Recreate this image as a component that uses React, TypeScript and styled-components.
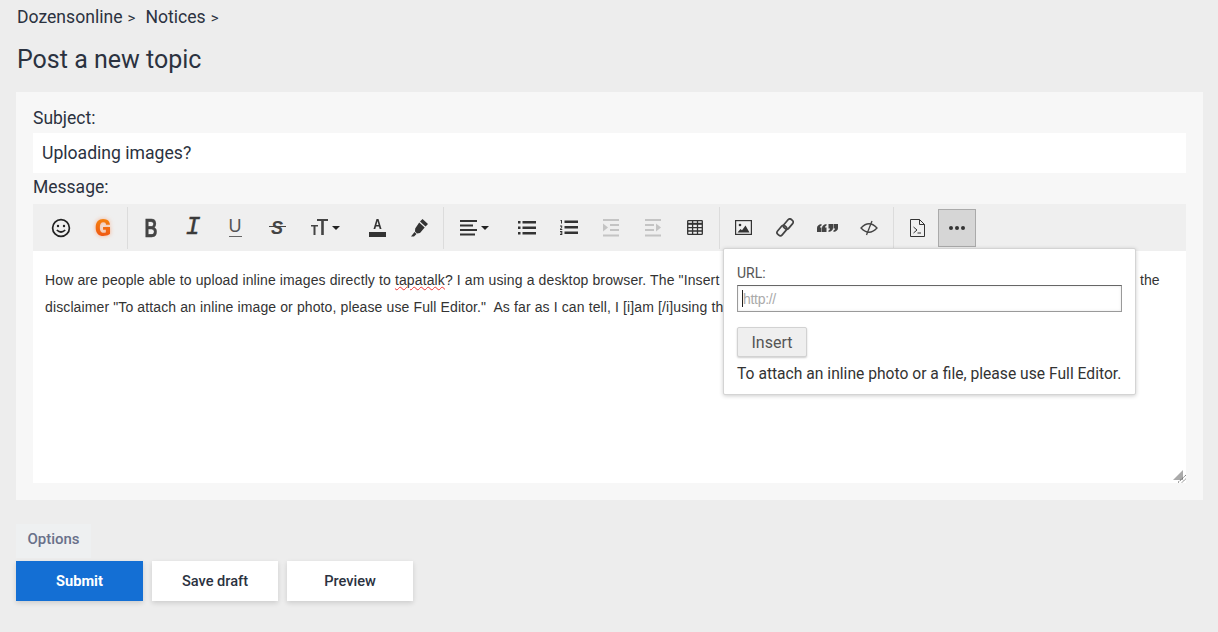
import React from 'react';
import styled, { createGlobalStyle } from 'styled-components';

const GlobalStyle = createGlobalStyle`
  html, body {
    margin: 0;
    padding: 0;
    background: #ededed;
    font-family: Roboto, "Liberation Sans", sans-serif;
    color: #2f3542;
  }
`;

const Page = styled.div`
  width: 1218px;
  height: 632px;
  overflow: hidden;
  padding: 0 15px 0 16px;
  box-sizing: border-box;
`;

const Breadcrumbs = styled.div`
  display: flex;
  gap: 10px;
  padding: 7px 0 0 1px;
  font-size: 17.6px;
  line-height: 21px;
  color: #2b3240;
`;

const Crumb = styled.span`
  &::after {
    content: '>';
    margin-left: 5px;
    font-size: 15px;
  }
`;

const Title = styled.h1`
  margin: 16px 0 0 1px;
  font-size: 25px;
  line-height: 30px;
  font-weight: 400;
  color: #2b3240;
`;

const Panel = styled.div`
  margin-top: 17px;
  background: #f7f7f7;
  padding: 16px 17px 17px;
  height: 408px;
  box-sizing: border-box;
`;

const FieldLabel = styled.div`
  font-size: 17.5px;
  line-height: 21px;
  padding-bottom: 4px;
  color: #2b3240;
`;

const SubjectInput = styled.input`
  display: block;
  width: 100%;
  height: 40px;
  box-sizing: border-box;
  border: 0;
  outline: 0;
  background: #fff;
  padding: 0 9px;
  margin-bottom: 4px;
  font-family: Roboto, sans-serif;
  font-size: 17.6px;
  color: #2b3240;
`;

const EditorWrap = styled.div`
  position: relative;
  margin-top: 2px;
`;

const Toolbar = styled.div`
  display: flex;
  align-items: center;
  height: 47px;
  padding: 0 0 0 7px;
  background: #efefef;
`;

const ToolButton = styled.div<{ $wide?: number; $active?: boolean }>`
  width: ${p => p.$wide ?? 42}px;
  height: 38px;
  flex: none;
  display: flex;
  align-items: center;
  justify-content: center;
  box-sizing: border-box;
  color: #333;
  ${p =>
    p.$active &&
    `
    width: 38px;
    background: #d6d6d6;
    border: 1px solid #aaa;
  `}
`;

const DropButton = styled(ToolButton)`
  padding-right: 3px;
`;

const Divider = styled.div`
  width: 1px;
  height: 42px;
  margin: 0 2px 0 3px;
  background: #dcdcdc;
  flex: none;
`;

const Caret = styled.span`
  width: 0;
  height: 0;
  margin-left: 4px;
  border-left: 4px solid transparent;
  border-right: 4px solid transparent;
  border-top: 4px solid #222;
`;

const LogoG = styled.span`
  font-family: Roboto, sans-serif;
  font-weight: 900;
  font-size: 24px;
  line-height: 26px;
  background: linear-gradient(180deg, #f58a0b, #ee4d16);
  -webkit-background-clip: text;
  background-clip: text;
  color: transparent;
  filter: drop-shadow(0 0 2px rgba(255, 130, 70, 0.6));
`;

const BoldGlyph = styled.span`
  display: inline-block;
  font-family: "Liberation Sans", sans-serif;
  font-weight: 700;
  font-size: 25px;
  line-height: 24px;
  color: #444;
  -webkit-text-stroke: 0.4px #444;
  transform: scaleX(0.72);
`;

const ItalicGlyph = styled.span`
  font-family: "Liberation Mono", monospace;
  font-style: italic;
  font-size: 25px;
  line-height: 24px;
  color: #3a3a3a;
  -webkit-text-stroke: 0.4px #3a3a3a;
`;

const UnderlineGlyph = styled.span`
  display: inline-block;
  font-family: "Liberation Sans", sans-serif;
  font-size: 18px;
  line-height: 17px;
  width: 13px;
  text-align: center;
  color: #555;
  border-bottom: 1px solid #666;
  padding-bottom: 1px;
`;

const StrikeGlyph = styled.span`
  position: relative;
  display: inline-block;
  width: 17px;
  text-align: center;
  font-family: "Liberation Sans", sans-serif;
  font-style: italic;
  font-weight: 700;
  font-size: 18px;
  line-height: 20px;
  color: #444;
  &::after {
    content: '';
    position: absolute;
    left: 0;
    right: 0;
    top: 8px;
    height: 1px;
    background: #444;
  }
`;

const EditorBody = styled.div`
  position: relative;
  height: 232px;
  box-sizing: border-box;
  background: #fff;
  padding: 16px 12px 15px;
  font-family: "Liberation Sans", Arial, sans-serif;
  font-size: 14px;
  letter-spacing: 0.12px;
  line-height: 27px;
  color: #333;
  white-space: pre;
  overflow: hidden;
`;

const Misspelled = styled.span`
  text-decoration: underline wavy #e33;
  text-decoration-thickness: 1px;
`;

const ResizeHandle = styled.svg`
  position: absolute;
  right: 0;
  bottom: 0;
`;

const Popup = styled.div`
  position: absolute;
  top: 44px;
  left: 690px;
  width: 413px;
  height: 147px;
  box-sizing: border-box;
  padding: 16px 14px 0 13px;
  background: #fff;
  border: 1px solid #d4d4d4;
  border-radius: 2px;
  box-shadow: 0 1px 4px rgba(0, 0, 0, 0.2);
`;

const UrlLabel = styled.div`
  font-size: 14px;
  line-height: 16px;
  color: #555;
  margin-bottom: 4px;
`;

const UrlField = styled.div`
  position: relative;
  &::before {
    content: '';
    position: absolute;
    left: 5px;
    top: 5px;
    width: 1px;
    height: 17px;
    background: #222;
  }
`;

const UrlInput = styled.input`
  display: block;
  width: 385px;
  height: 27px;
  box-sizing: border-box;
  border: 1px solid #9a9a9a;
  border-top-color: #666;
  outline: 0;
  padding: 0 5px;
  font-family: "Liberation Sans", Arial, sans-serif;
  font-size: 14px;
  letter-spacing: -0.3px;
  box-shadow: inset 0 0 3px rgba(0, 0, 0, 0.1);
  &::placeholder {
    color: #aaa;
    opacity: 1;
  }
`;

const InsertButton = styled.button`
  display: block;
  margin-top: 15px;
  width: 70px;
  height: 30px;
  padding: 0;
  background: #efefef;
  border: 1px solid #d2d2d2;
  border-radius: 2px;
  box-shadow: 0 1px 2px rgba(0, 0, 0, 0.2);
  font-family: Roboto, sans-serif;
  font-size: 16px;
  color: #555;
`;

const PopupNote = styled.div`
  margin-top: 7px;
  font-size: 15.65px;
  line-height: 20px;
  color: #333;
  white-space: nowrap;
`;

const OptionsTab = styled.div`
  width: 75px;
  height: 34px;
  margin-top: 24px;
  box-sizing: border-box;
  background: #eef0f1;
  text-align: center;
  font-size: 15px;
  font-weight: 500;
  line-height: 31px;
  color: #69708a;
`;

const Actions = styled.div`
  display: flex;
  gap: 9px;
  margin-top: 3px;
`;

const ActionButton = styled.button<{ $primary?: boolean }>`
  width: ${p => (p.$primary ? 127 : 126)}px;
  height: 40px;
  padding: 0;
  border: 0;
  background: ${p => (p.$primary ? '#146fd4' : '#fff')};
  color: ${p => (p.$primary ? '#fff' : '#2b3240')};
  box-shadow: 0 2px 5px rgba(0, 0, 0, 0.14);
  font-family: Roboto, sans-serif;
  font-size: 14.6px;
  font-weight: ${p => (p.$primary ? 700 : 500)};
`;

const Icon = styled.svg`
  display: block;
  flex: none;
`;

const Smile = () => (
  <Icon width="20" height="20" viewBox="0 0 20 20" fill="none" stroke="#222" strokeWidth="1.7">
    <circle cx="10" cy="10" r="8.4" />
    <circle cx="7" cy="8" r="1.2" fill="#222" stroke="none" />
    <circle cx="13" cy="8" r="1.2" fill="#222" stroke="none" />
    <path d="M5.8 12q4.2 4 8.400 0" />
  </Icon>
);

const TextSize = () => (
  <Icon width="17" height="17" viewBox="0 0 17 17" fill="#444">
    <path d="M0 6h7v1.500H4.500V16H2.500V7.500H0zM6 0h11v2h-4.200v14H10.200V2H6z" />
  </Icon>
);

const TextColor = () => (
  <Icon width="17" height="18" viewBox="0 0 17 18" fill="#333">
    <path d="M7.500 0h2l3 10h-1.800l-.7-2.500H7L6.300 10H4.500zM7.400 6h2.200L8.500 2z" fillRule="evenodd" />
    <rect y="13" width="17" height="5" />
  </Icon>
);

const Marker = () => (
  <Icon width="17" height="18" viewBox="0 0 17 18" fill="#333">
    <path d="M11.500 0L17 5l-2.500 2.500-5.500-5zM8.200 3.500l5.500 5-4.700 5.500L6 14.500l-2-2 .2-3z" />
    <path d="M3.500 13L5.500 15 3 17.500H0z" />
  </Icon>
);

const AlignLeft = () => (
  <Icon width="17" height="16" viewBox="0 0 17 16" fill="#333">
    <rect y="0" width="17" height="2" />
    <rect y="4.500" width="13" height="2" />
    <rect y="9" width="17" height="2" />
    <rect y="13.500" width="15" height="2" />
  </Icon>
);

const Bullets = () => (
  <Icon width="18" height="14" viewBox="0 0 18 14" fill="#333">
    <rect width="2.500" height="2.500" y="0" />
    <rect width="2.500" height="2.500" y="5.500" />
    <rect width="2.500" height="2.500" y="11" />
    <rect x="4.500" y="0" width="13.500" height="2.500" />
    <rect x="4.500" y="5.500" width="13.500" height="2.500" />
    <rect x="4.500" y="11" width="13.500" height="2.500" />
  </Icon>
);

const Numbered = () => (
  <Icon width="18" height="15" viewBox="0 0 18 15" fill="#333">
    <path d="M.5 0H2v3.600H1V1H.5zM0 5.500h2.200v2L1 9h1.300v1H0V9l1.300-1.600V6.500H0zM0 11h2.300v4H0v-1h1.400v-.6H.4v-.8h1V12H0z" />
    <rect x="4.500" y="0.500" width="13.500" height="2.500" />
    <rect x="4.500" y="6" width="13.500" height="2.500" />
    <rect x="4.500" y="11.500" width="13.500" height="2.500" />
  </Icon>
);

const Outdent = () => (
  <Icon width="16" height="18" viewBox="0 0 16 18" fill="#c4c4c4">
    <rect width="16" height="2" y="0" />
    <rect x="7" width="9" height="2" y="5" />
    <rect x="7" width="9" height="2" y="10" />
    <rect width="16" height="2" y="15.500" />
    <path d="M0 4.500l5 4-5 4z" />
  </Icon>
);

const Indent = () => (
  <Icon width="16" height="18" viewBox="0 0 16 18" fill="#c4c4c4">
    <rect width="16" height="2" y="0" />
    <rect width="9" height="2" y="5" />
    <rect width="9" height="2" y="10" />
    <rect width="16" height="2" y="15.500" />
    <path d="M11 4.500l5 4-5 4z" />
  </Icon>
);

const TableIcon = () => (
  <Icon width="16" height="15" viewBox="0 0 16 15" fill="none" stroke="#333" strokeWidth="1.300">
    <rect x=".7" y=".7" width="14.600" height="13.600" rx=".6" />
    <path d="M.7 3.800h14.600" strokeWidth="2" />
    <path d="M.7 7.700h14.600M.7 11h14.600M5.600 1v13M10.500 1v13" />
  </Icon>
);

const ImageIcon = () => (
  <Icon width="17" height="15" viewBox="0 0 17 15">
    <rect x=".6" y=".6" width="15.800" height="13.800" fill="none" stroke="#333" strokeWidth="1.200" />
    <circle cx="5" cy="5" r="1.300" fill="#333" />
    <path d="M2.500 12.500l3-3.500 1.500 1.300L10.500 5.500l4 7z" fill="#333" />
  </Icon>
);

const LinkIcon = () => (
  <Icon width="18" height="19" viewBox="0 0 18 19" fill="none" stroke="#444" strokeWidth="1.700">
    <rect x="-3" y="-6" width="6" height="11" rx="2.400" transform="translate(12 6.500) rotate(40)" />
    <rect x="-3" y="-5" width="6" height="11" rx="2.400" transform="translate(6.200 12.200) rotate(40)" />
  </Icon>
);

const quoteMark = 'M4.500 0v1.500C3.500 2 3 2.600 3 3.500h1.500V8H0V4C0 2 1.500.5 4.500 0z';

const QuoteIcon = () => (
  <Icon width="21" height="8" viewBox="0 0 21 8" fill="#444">
    <path d={quoteMark} />
    <path d={quoteMark} transform="translate(5 0)" />
    <path d={quoteMark} transform="rotate(180 8 4)" />
    <path d={quoteMark} transform="translate(5 0) rotate(180 8 4)" />
  </Icon>
);

const HideIcon = () => (
  <Icon width="18" height="16" viewBox="0 0 18 16" fill="none" stroke="#444" strokeWidth="1.300">
    <path d="M1 8q8-8.500 16 0q-8 8.500-16 0z" />
    <path d="M12 1L6.500 15" />
  </Icon>
);

const CodeIcon = () => (
  <Icon width="15" height="18" viewBox="0 0 15 18" fill="none" stroke="#333" strokeWidth="1">
    <path d="M.5.500h9l5 5v12H.5zM9.500.500v5h5" />
    <path d="M3.500 8l3.500 3-3.500 3M7.500 14h3.500" />
  </Icon>
);

const MoreDots = () => (
  <Icon width="16" height="4" viewBox="0 0 16 4" fill="#333">
    <circle cx="2" cy="2" r="2" />
    <circle cx="8" cy="2" r="2" />
    <circle cx="14" cy="2" r="2" />
  </Icon>
);

const App: React.FC = () => {
  return (
    <Page>
      <GlobalStyle />
      <Breadcrumbs>
        <Crumb>Dozensonline</Crumb>
        <Crumb>Notices</Crumb>
      </Breadcrumbs>
      <Title>Post a new topic</Title>
      <Panel>
        <FieldLabel>Subject:</FieldLabel>
        <SubjectInput defaultValue="Uploading images?" />
        <FieldLabel>Message:</FieldLabel>
        <EditorWrap>
          <Toolbar>
            <ToolButton><Smile /></ToolButton>
            <ToolButton><LogoG>G</LogoG></ToolButton>
            <Divider />
            <ToolButton><BoldGlyph>B</BoldGlyph></ToolButton>
            <ToolButton><ItalicGlyph>I</ItalicGlyph></ToolButton>
            <ToolButton><UnderlineGlyph>U</UnderlineGlyph></ToolButton>
            <ToolButton><StrikeGlyph>S</StrikeGlyph></ToolButton>
            <DropButton $wide={58}><TextSize /><Caret /></DropButton>
            <ToolButton><TextColor /></ToolButton>
            <ToolButton><Marker /></ToolButton>
            <Divider />
            <DropButton $wide={60}><AlignLeft /><Caret /></DropButton>
            <ToolButton><Bullets /></ToolButton>
            <ToolButton><Numbered /></ToolButton>
            <ToolButton><Outdent /></ToolButton>
            <ToolButton><Indent /></ToolButton>
            <ToolButton><TableIcon /></ToolButton>
            <Divider />
            <ToolButton><ImageIcon /></ToolButton>
            <ToolButton><LinkIcon /></ToolButton>
            <ToolButton><QuoteIcon /></ToolButton>
            <ToolButton><HideIcon /></ToolButton>
            <Divider />
            <ToolButton><CodeIcon /></ToolButton>
            <ToolButton $active><MoreDots /></ToolButton>
          </Toolbar>
          <EditorBody>
            How are people able to upload inline images directly to <Misspelled>tapatalk</Misspelled>? I am using a desktop browser. The "Insert Image" button only asks me for an image URL,  and it also shows the
            <br />
            disclaimer "To attach an inline image or photo, please use Full Editor."  As far as I can tell, I [i]am [/i]using the Full Editor.
            <ResizeHandle width="16" height="14" viewBox="0 0 16 14">
              <path d="M3 11L13 1v10z" fill="#aaa" />
              <path d="M8 13.500L16 6M12 13.500L16 9.500" stroke="#555" strokeWidth="1" strokeDasharray="1.500 1" />
            </ResizeHandle>
          </EditorBody>
          <Popup>
            <UrlLabel>URL:</UrlLabel>
            <UrlField>
              <UrlInput placeholder="http://" />
            </UrlField>
            <InsertButton>Insert</InsertButton>
            <PopupNote>To attach an inline photo or a file, please use Full Editor.</PopupNote>
          </Popup>
        </EditorWrap>
      </Panel>
      <OptionsTab>Options</OptionsTab>
      <Actions>
        <ActionButton $primary>Submit</ActionButton>
        <ActionButton>Save draft</ActionButton>
        <ActionButton>Preview</ActionButton>
      </Actions>
    </Page>
  );
};

export default App;
